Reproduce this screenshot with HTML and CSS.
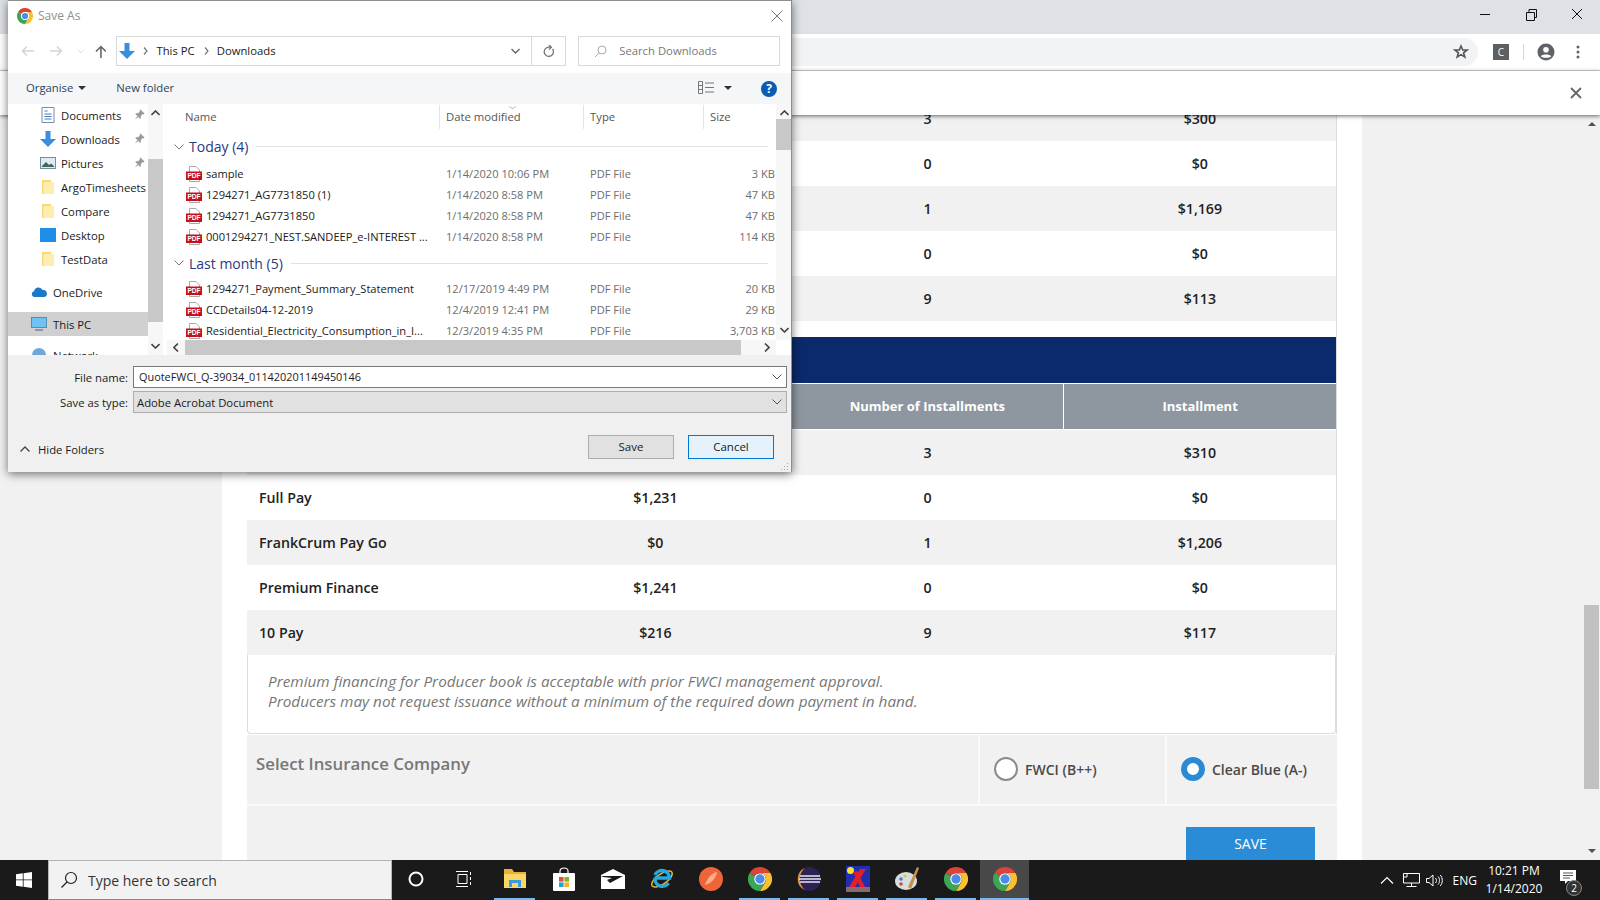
FILE: index.html
```html
<!DOCTYPE html>
<html>
<head>
    <meta charset="UTF-8">
    <meta name="viewport" content="width=device-width, initial-scale=1.0">
    <title>Save As</title>
    <link rel="stylesheet" href="styles.css">
</head>
<body>
    <svg class="defs" width="0" height="0">
        <symbol id="chrome" viewBox="0 0 16 16">
            <path fill="#db4437" d="M1.07 4A8 8 0 0 1 14.93 4H8A4 4 0 0 0 4.54 6Z"/>
            <path fill="#fbc02d" d="M14.93 4A8 8 0 0 1 8 16L11.46 10A4 4 0 0 0 8 4Z"/>
            <path fill="#3aa757" d="M1.07 4A8 8 0 0 0 8 16L11.46 10A4 4 0 0 1 4.54 6Z"/>
            <circle cx="8" cy="8" r="3.9" fill="#fff"/>
            <circle cx="8" cy="8" r="3.1" fill="#4a8ce8"/>
        </symbol>
        <symbol id="pdf" viewBox="0 0 16 16">
            <path fill="#fff" stroke="#a8a8a8" d="M3.5.5H10L13.5 4V15.5H3.5Z"/>
            <rect x="0" y="5.5" width="16" height="8.5" fill="#c4111b"/>
            <text x="8" y="12.2" class="pdf-label" text-anchor="middle">PDF</text>
        </symbol>
        <symbol id="folder" viewBox="0 0 16 16">
            <path fill="#f8d775" d="M2 1H11V15H2Z"/>
            <path fill="#fdeeb0" d="M3.5 3H14V15H3.5Z"/>
        </symbol>
        <symbol id="pin" viewBox="0 0 12 12">
            <path fill="#9a9a9a" d="M7 .5L11.5 5L10.5 6L9.5 5.5L7.5 7.5L7.5 10L6.5 10.5L1.5 5.5L2 4.5L4.5 4.5L6.5 2.5L6 1.5ZM3.5 8L4.5 9L1 11.5Z"/>
        </symbol>
        <symbol id="down-arrow" viewBox="0 0 16 16">
            <path fill="#3a8ee0" d="M5.5 0H10.5V8H16L8 16L0 8H5.5Z"/>
        </symbol>
    </svg>

    <div class="tabstrip">
        <div class="wincontrols">
            <svg width="46" height="28" viewBox="0 0 46 28"><path d="M18 14.5H28" stroke="#111" fill="none"/></svg>
            <svg width="46" height="28" viewBox="0 0 46 28"><path d="M18.5 12.5H26.5V20.5H18.5ZM21 12V9.5H28.5V17.5H27" stroke="#111" fill="none"/></svg>
            <svg width="46" height="28" viewBox="0 0 46 28"><path d="M18 9L28 19M28 9L18 19" stroke="#111" fill="none"/></svg>
        </div>
    </div>
    <div class="toolbar">
        <div class="omnibox">
            <svg width="16" height="16" viewBox="0 0 16 16"><path d="M8 2L9.7 6H14L10.6 8.8L11.8 13L8 10.6L4.2 13L5.4 8.8L2 6H6.3Z" fill="none" stroke="#555" stroke-width="1.6"/></svg>
        </div>
        <div class="ext-icon">C</div>
        <div class="toolbar-sep"></div>
        <svg class="account" width="18" height="18" viewBox="0 0 18 18"><circle cx="9" cy="9" r="8.5" fill="#5f6368"/><circle cx="9" cy="6.8" r="2.8" fill="#fff"/><path d="M3.8 13.2C5 10.8 13 10.8 14.2 13.2C12.6 15.4 5.4 15.4 3.8 13.2Z" fill="#fff"/></svg>
        <svg class="dots" width="4" height="14" viewBox="0 0 4 14"><circle cx="2" cy="2" r="1.5" fill="#5f6368"/><circle cx="2" cy="7" r="1.5" fill="#5f6368"/><circle cx="2" cy="12" r="1.5" fill="#5f6368"/></svg>
    </div>
    <div class="infobar">
        <svg width="12" height="12" viewBox="0 0 12 12"><path d="M1 1L11 11M11 1L1 11" stroke="#666" stroke-width="1.8" fill="none"/></svg>
    </div>

    <div class="page">
        <div class="panel">
            <div class="quote">
                <table class="plans">
                    <tr class="odd"><td></td><td></td><td>3</td><td>$300</td></tr>
                    <tr><td></td><td></td><td>0</td><td>$0</td></tr>
                    <tr class="odd"><td></td><td></td><td>1</td><td>$1,169</td></tr>
                    <tr><td></td><td></td><td>0</td><td>$0</td></tr>
                    <tr class="odd"><td></td><td></td><td>9</td><td>$113</td></tr>
                </table>
                <div class="section-head"></div>
                <table class="plans">
                    <tr class="head"><th></th><th></th><th>Number of Installments</th><th>Installment</th></tr>
                    <tr class="odd"><td></td><td></td><td>3</td><td>$310</td></tr>
                    <tr><td>Full Pay</td><td>$1,231</td><td>0</td><td>$0</td></tr>
                    <tr class="odd"><td>FrankCrum Pay Go</td><td>$0</td><td>1</td><td>$1,206</td></tr>
                    <tr><td>Premium Finance</td><td>$1,241</td><td>0</td><td>$0</td></tr>
                    <tr class="odd"><td>10 Pay</td><td>$216</td><td>9</td><td>$117</td></tr>
                </table>
                <div class="note">
                    Premium financing for Producer book is acceptable with prior FWCI management approval.<br>
                    Producers may not request issuance without a minimum of the required down payment in hand.
                </div>
            </div>
            <div class="company">
                <div class="company-title">Select Insurance Company</div>
                <div class="company-opt"><span class="radio"></span>FWCI (B++)</div>
                <div class="company-opt"><span class="radio on"></span>Clear Blue (A-)</div>
            </div>
            <div class="actions">
                <button class="save-btn">SAVE</button>
            </div>
        </div>
        <div class="page-scroll">
            <span class="tri up"></span>
            <span class="page-thumb"></span>
            <span class="tri down"></span>
        </div>
    </div>

    <div class="taskbar">
        <div class="start">
            <svg width="16" height="16" viewBox="0 0 16 16"><path fill="#fff" d="M0 2.3L6.8 1.3V7.5H0ZM7.6 1.2L16 0V7.5H7.6ZM0 8.3H6.8V14.7L0 13.7ZM7.6 8.3H16V16L7.6 14.8Z"/></svg>
        </div>
        <div class="search">
            <svg width="18" height="18" viewBox="0 0 18 18"><circle cx="11" cy="7" r="5.5" fill="none" stroke="#222" stroke-width="1.2"/><path d="M7 11L1.5 16.5" stroke="#222" stroke-width="1.3"/></svg>
            <span>Type here to search</span>
        </div>
        <div class="task-btn wide">
            <svg width="16" height="16" viewBox="0 0 16 16"><circle cx="8" cy="8" r="6.5" fill="none" stroke="#fff" stroke-width="2"/></svg>
        </div>
        <div class="task-btn wide taskview">
            <svg width="16" height="16" viewBox="0 0 16 16"><path d="M0 .5H12M0 15.5H12M2 3.5H11V12.5H2ZM14.5 1V4M14.5 6V9M14.5 11V14" fill="none" stroke="#fff"/></svg>
        </div>
        <div class="task-btn open">
            <svg width="22" height="20" viewBox="0 0 22 20"><path fill="#e8b23a" d="M0 0H8L10 3H22V19H0Z"/><path fill="#fbd566" d="M0 5H22V19H0Z"/><path fill="#3a9ae0" d="M5 11H17V18H14V14H8V18H5Z"/></svg>
        </div>
        <div class="task-btn">
            <svg width="22" height="24" viewBox="0 0 22 24"><path fill="none" stroke="#fff" stroke-width="1.2" d="M7 7V4C7 0 15 0 15 4V7"/><rect y="6" width="22" height="18" rx="1" fill="#fff"/><rect x="6" y="10" width="4.6" height="4.6" fill="#e0532f"/><rect x="11.4" y="10" width="4.6" height="4.6" fill="#7fb62c"/><rect x="6" y="15.4" width="4.6" height="4.6" fill="#2a9fe0"/><rect x="11.4" y="15.4" width="4.6" height="4.6" fill="#f6b31c"/></svg>
        </div>
        <div class="task-btn">
            <svg width="24" height="20" viewBox="0 0 24 20"><path fill="#fff" d="M0 6L12 0L24 6V20H0Z"/><path fill="#1a1a1a" d="M0 7L22 7L9 14L6 11L11 9L2 8Z"/></svg>
        </div>
        <div class="task-btn">
            <svg width="24" height="24" viewBox="0 0 24 24"><ellipse cx="12" cy="12" rx="12" ry="5" transform="rotate(-35 12 12)" fill="none" stroke="#e3b63a" stroke-width="1.5"/><path d="M4.5 11H19.5A7.6 7.6 0 0 0 5 8" fill="none" stroke="#2aa8e0" stroke-width="3.4"/><path d="M5 11A7.4 7.4 0 0 0 18.5 16" fill="none" stroke="#2aa8e0" stroke-width="3.4"/></svg>
        </div>
        <div class="task-btn">
            <svg width="24" height="26" viewBox="0 0 24 26"><circle cx="12" cy="13" r="12" fill="#f0643a"/><path d="M6 19C8 12 13 7 18 6C17 12 13 17 6 19Z" fill="#ffb089"/></svg>
        </div>
        <div class="task-btn open"><svg width="24" height="24"><use href="#chrome"/></svg></div>
        <div class="task-btn open">
            <svg width="24" height="24" viewBox="0 0 24 24"><circle cx="12" cy="12" r="12" fill="#2c2255"/><path d="M8 1A12 12 0 0 0 8 23A14 14 0 0 1 8 1Z" fill="#e89a3a"/><path d="M3 9H23M2 12H24M3 15H23" stroke="#e8e8f4" stroke-width="1.4"/></svg>
        </div>
        <div class="task-btn open">
            <svg width="24" height="26" viewBox="0 0 24 26"><rect width="24" height="26" fill="#1f2fb0"/><circle cx="4.5" cy="4.5" r="3.5" fill="#f5e23a"/><path d="M14 3L20 3L9 21L3 21ZM7 6L11 5L19 21L14 21Z" fill="#e01f2a"/><rect y="21" width="24" height="5" fill="#8a6a6a"/></svg>
        </div>
        <div class="task-btn open">
            <svg width="26" height="26" viewBox="0 0 26 26"><ellipse cx="12" cy="15" rx="11" ry="9" fill="#d7dde0"/><circle cx="7" cy="13" r="1.8" fill="#3a80c8"/><circle cx="11" cy="10" r="1.6" fill="#e0c43a"/><circle cx="7" cy="18" r="1.8" fill="#d8482f"/><path d="M14 21L23 1L25 2L17 23Z" fill="#c98f4a"/></svg>
        </div>
        <div class="task-btn open"><svg width="24" height="24"><use href="#chrome"/></svg></div>
        <div class="task-btn open active"><svg width="24" height="24"><use href="#chrome"/></svg></div>

        <div class="tray">
            <svg class="tray-chev" width="14" height="8" viewBox="0 0 14 8"><path d="M1 7.5L7 1.5L13 7.5" fill="none" stroke="#fff" stroke-width="1.2"/></svg>
            <svg class="tray-net" width="17" height="14" viewBox="0 0 17 14"><path d="M.5 .5H16.5V10H.5ZM8.5 10V13.5M3.5 13.5H13.5M.5 4H4V.5" fill="none" stroke="#fff"/></svg>
            <svg class="tray-vol" width="17" height="13" viewBox="0 0 17 13"><path d="M.5 4.5H3L7 1V12L3 8.5H.5ZM9.5 4C10.8 5.5 10.8 7.5 9.5 9M12 2.5C14 4.5 14 8.5 12 10.5M14.2 1C17 4 17 9 14.2 12" fill="none" stroke="#fff"/></svg>
            <span class="lang">ENG</span>
            <div class="clock"><span>10:21 PM</span><span>1/14/2020</span></div>
            <div class="notify">
                <svg width="16" height="14" viewBox="0 0 16 14"><path fill="#fff" d="M0 0H16V11H8L5 14V11H0Z"/><path d="M3 3H13M3 5.5H13M3 8H10" stroke="#555"/></svg>
                <span class="notify-count">2</span>
            </div>
        </div>
    </div>

    <div class="dialog">
        <div class="titlebar">
            <svg width="16" height="16"><use href="#chrome"/></svg>
            <span class="title-text">Save As</span>
            <svg class="title-close" width="12" height="12" viewBox="0 0 12 12"><path d="M.5 .5L11.5 11.5M11.5 .5L.5 11.5" stroke="#777" fill="none"/></svg>
        </div>
        <div class="navbar">
            <svg class="nav-arrow" width="14" height="12" viewBox="0 0 14 12"><path d="M13 6H2M6 1.5L1.5 6L6 10.5" stroke="#d4d4d4" stroke-width="1.5" fill="none"/></svg>
            <svg class="nav-arrow" width="14" height="12" viewBox="0 0 14 12"><path d="M1 6H12M8 1.5L12.5 6L8 10.5" stroke="#d4d4d4" stroke-width="1.5" fill="none"/></svg>
            <svg class="nav-arrow" width="8" height="5" viewBox="0 0 8 5"><path d="M.5 .5L4 4L7.5 .5" stroke="#dcdcdc" fill="none"/></svg>
            <svg class="nav-arrow up" width="12" height="13" viewBox="0 0 12 13"><path d="M6 13V2M1 6.5L6 1.5L11 6.5" stroke="#666" stroke-width="1.6" fill="none"/></svg>
            <div class="address">
                <svg width="16" height="16"><use href="#down-arrow"/></svg>
                <svg class="crumb-sep" width="5" height="8" viewBox="0 0 5 8"><path d="M1 .5L4 4L1 7.5" stroke="#777" fill="none" stroke-width="1.2"/></svg>
                <span>This PC</span>
                <svg class="crumb-sep second" width="5" height="8" viewBox="0 0 5 8"><path d="M1 .5L4 4L1 7.5" stroke="#777" fill="none" stroke-width="1.2"/></svg>
                <span>Downloads</span>
                <svg class="addr-chev" width="9" height="6" viewBox="0 0 9 6"><path d="M.5 1L4.5 5L8.5 1" stroke="#666" stroke-width="1.4" fill="none"/></svg>
                <div class="addr-refresh">
                    <svg width="11" height="12" viewBox="0 0 11 12"><path d="M9.5 4A4.6 4.6 0 1 1 5.5 2.2H8M6 0L8.4 2.2L6 4.4" stroke="#777" stroke-width="1.3" fill="none"/></svg>
                </div>
            </div>
            <div class="searchbox">
                <svg width="13" height="13" viewBox="0 0 13 13"><circle cx="8" cy="5" r="4" fill="none" stroke="#aaa"/><path d="M5 8L1 12" stroke="#aaa"/></svg>
                <span>Search Downloads</span>
            </div>
        </div>
        <div class="cmdbar">
            <span class="cmd">Organise<i class="caret"></i></span>
            <span class="cmd newfolder">New folder</span>
            <svg class="viewicon" width="16" height="13" viewBox="0 0 16 13"><path d="M.5 .5H4.5V12.5H.5ZM.5 4.5H4.5M.5 8.5H4.5M7 2H16M7 6.5H16M7 11H16" fill="none" stroke="#777"/></svg>
            <i class="caret view-caret"></i>
            <span class="help">?</span>
        </div>
        <div class="browser">
            <div class="sidebar">
                <div class="side-list">
                    <div class="side-item">
                        <svg width="13" height="16" viewBox="0 0 13 16"><path d="M.5 .5H12.5V15.5H.5Z" fill="#fff" stroke="#7b8ca0"/><path d="M3 4H6M3 7H10M3 9.5H10M3 12H10" stroke="#3a7ac0"/></svg>
                        <span>Documents</span>
                        <svg class="pin" width="11" height="11"><use href="#pin"/></svg>
                    </div>
                    <div class="side-item">
                        <svg width="16" height="16"><use href="#down-arrow"/></svg>
                        <span>Downloads</span>
                        <svg class="pin" width="11" height="11"><use href="#pin"/></svg>
                    </div>
                    <div class="side-item">
                        <svg width="16" height="12" viewBox="0 0 16 12"><rect x=".5" y=".5" width="15" height="11" fill="#dfeaf2" stroke="#7b8ca0"/><path d="M2 9L6 5L9 8L11 6.5L14 9V10H2Z" fill="#3e6a5a"/></svg>
                        <span>Pictures</span>
                        <svg class="pin" width="11" height="11"><use href="#pin"/></svg>
                    </div>
                    <div class="side-item"><svg width="16" height="16"><use href="#folder"/></svg><span>ArgoTimesheets</span></div>
                    <div class="side-item"><svg width="16" height="16"><use href="#folder"/></svg><span>Compare</span></div>
                    <div class="side-item">
                        <svg width="16" height="14" viewBox="0 0 16 14"><rect width="16" height="14" fill="#1e8fe6"/></svg>
                        <span>Desktop</span>
                    </div>
                    <div class="side-item last"><svg width="16" height="16"><use href="#folder"/></svg><span>TestData</span></div>
                    <div class="side-item shallow onedrive">
                        <svg width="16" height="10" viewBox="0 0 16 10"><path fill="#1d78c8" d="M3 10A3 3 0 0 1 3 4.2A4.6 4.6 0 0 1 11.6 3A3.5 3.5 0 0 1 13 10Z"/></svg>
                        <span>OneDrive</span>
                    </div>
                    <div class="side-item shallow selected">
                        <svg width="16" height="14" viewBox="0 0 16 14"><rect x=".5" y=".5" width="15" height="10" fill="#6fc3f2" stroke="#5a8ab0"/><path d="M4 13H12" stroke="#6a8aa0" stroke-width="1.5"/></svg>
                        <span>This PC</span>
                    </div>
                    <div class="side-item shallow">
                        <svg width="16" height="14" viewBox="0 0 16 14"><circle cx="8" cy="7" r="7" fill="#6fa8d8"/></svg>
                        <span>Network</span>
                    </div>
                </div>
                <div class="side-scroll">
                    <svg width="9" height="6" viewBox="0 0 9 6"><path d="M.5 5L4.5 1L8.5 5" stroke="#444" stroke-width="1.6" fill="none"/></svg>
                    <span class="side-thumb"></span>
                    <svg width="9" height="6" viewBox="0 0 9 6"><path d="M.5 1L4.5 5L8.5 1" stroke="#444" stroke-width="1.6" fill="none"/></svg>
                </div>
            </div>
            <div class="files">
                <div class="filepane">
                    <div class="cols">
                        <span class="col">Name</span>
                        <span class="col sorted">Date modified</span>
                        <span class="col">Type</span>
                        <span class="col">Size</span>
                    </div>
                    <div class="group">
                        <svg width="10" height="6" viewBox="0 0 10 6"><path d="M.5 .5L5 5L9.5 .5" stroke="#777" fill="none"/></svg>
                        <span>Today (4)</span><i></i>
                    </div>
                    <div class="file"><span class="fname"><svg width="16" height="16"><use href="#pdf"/></svg>sample</span><span>1/14/2020 10:06 PM</span><span>PDF File</span><span class="fsize">3 KB</span></div>
                    <div class="file"><span class="fname"><svg width="16" height="16"><use href="#pdf"/></svg>1294271_AG7731850 (1)</span><span>1/14/2020 8:58 PM</span><span>PDF File</span><span class="fsize">47 KB</span></div>
                    <div class="file"><span class="fname"><svg width="16" height="16"><use href="#pdf"/></svg>1294271_AG7731850</span><span>1/14/2020 8:58 PM</span><span>PDF File</span><span class="fsize">47 KB</span></div>
                    <div class="file"><span class="fname"><svg width="16" height="16"><use href="#pdf"/></svg>0001294271_NEST.SANDEEP_e-INTEREST ...</span><span>1/14/2020 8:58 PM</span><span>PDF File</span><span class="fsize">114 KB</span></div>
                    <div class="group next">
                        <svg width="10" height="6" viewBox="0 0 10 6"><path d="M.5 .5L5 5L9.5 .5" stroke="#777" fill="none"/></svg>
                        <span>Last month (5)</span><i></i>
                    </div>
                    <div class="file"><span class="fname"><svg width="16" height="16"><use href="#pdf"/></svg>1294271_Payment_Summary_Statement</span><span>12/17/2019 4:49 PM</span><span>PDF File</span><span class="fsize">20 KB</span></div>
                    <div class="file"><span class="fname"><svg width="16" height="16"><use href="#pdf"/></svg>CCDetails04-12-2019</span><span>12/4/2019 12:41 PM</span><span>PDF File</span><span class="fsize">29 KB</span></div>
                    <div class="file"><span class="fname"><svg width="16" height="16"><use href="#pdf"/></svg>Residential_Electricity_Consumption_in_I...</span><span>12/3/2019 4:35 PM</span><span>PDF File</span><span class="fsize">3,703 KB</span></div>
                </div>
                <div class="files-scroll">
                    <svg width="9" height="6" viewBox="0 0 9 6"><path d="M.5 5L4.5 1L8.5 5" stroke="#444" stroke-width="1.6" fill="none"/></svg>
                    <span class="files-thumb"></span>
                    <svg width="9" height="6" viewBox="0 0 9 6"><path d="M.5 1L4.5 5L8.5 1" stroke="#444" stroke-width="1.6" fill="none"/></svg>
                </div>
                <div class="hscroll">
                    <svg width="6" height="9" viewBox="0 0 6 9"><path d="M5 .5L1 4.5L5 8.5" stroke="#444" stroke-width="1.6" fill="none"/></svg>
                    <span class="hthumb"></span>
                    <svg width="6" height="9" viewBox="0 0 6 9"><path d="M1 .5L5 4.5L1 8.5" stroke="#444" stroke-width="1.6" fill="none"/></svg>
                </div>
            </div>
        </div>
        <div class="savefields">
            <div class="field">
                <label>File name:</label>
                <div class="namebox"><span>QuoteFWCI_Q-39034_011420201149450146</span><svg width="10" height="6" viewBox="0 0 10 6"><path d="M.5 .5L5 5L9.5 .5" stroke="#555" fill="none"/></svg></div>
            </div>
            <div class="field">
                <label>Save as type:</label>
                <div class="typebox">Adobe Acrobat Document<svg width="10" height="6" viewBox="0 0 10 6"><path d="M.5 .5L5 5L9.5 .5" stroke="#555" fill="none"/></svg></div>
            </div>
        </div>
        <div class="dlg-foot">
            <span class="hidefolders">
                <svg width="10" height="6" viewBox="0 0 10 6"><path d="M.5 5.5L5 1L9.5 5.5" stroke="#444" stroke-width="1.3" fill="none"/></svg>
                Hide Folders
            </span>
            <button class="dlg-btn">Save</button>
            <button class="dlg-btn focus">Cancel</button>
        </div>
        <svg class="grip" width="9" height="9" viewBox="0 0 9 9"><path d="M7 1h1v1H7zM4 4h1v1H4zM7 4h1v1H7zM1 7h1v1H1zM4 7h1v1H4zM7 7h1v1H7z" fill="#aaa"/></svg>
    </div>
</body>
</html>
```

FILE: styles.css
```css
* {
    box-sizing:border-box;
}
html, body {
    margin:0;
    height:100%;
}
body {
    width:1600px;
    height:900px;
    overflow:hidden;
    display:flex;
    flex-direction:column;
    position:relative;
    font-family:"Open Sans", "Noto Sans", sans-serif;
    background:#f1f1f1;
}
.defs {
    position:absolute;
}
.pdf-label {
    font-family:"Liberation Sans", sans-serif;
    font-size:6.6px;
    font-weight:bold;
    fill:#fff;
}

/* browser window */
.tabstrip {
    height:34px;
    flex:none;
    background:#dee1e6;
    display:flex;
    justify-content:flex-end;
}
.wincontrols {
    display:flex;
}
.wincontrols svg {
    display:block;
}
.toolbar {
    height:37px;
    flex:none;
    background:#fff;
    border-bottom:1px solid #d6d6d6;
    display:flex;
    align-items:center;
    padding-left:700px;
}
.omnibox {
    width:778px;
    height:28px;
    margin-bottom:1px;
    background:#f1f3f4;
    border-radius:0 14px 14px 0;
    display:flex;
    align-items:center;
    justify-content:flex-end;
    padding-right:9px;
}
.ext-icon {
    width:16px;
    height:16px;
    margin-left:15px;
    background:#5f5f5f;
    color:#fff;
    font-size:10px;
    line-height:16px;
    text-align:center;
}
.toolbar-sep {
    width:1px;
    height:16px;
    margin-left:14px;
    background:#d6d6d6;
}
.account {
    margin-left:13px;
}
.dots {
    margin-left:21px;
}
.infobar {
    height:44px;
    flex:none;
    background:#fff;
    box-shadow:0 1px 4px rgba(0,0,0,.6);
    position:relative;
    z-index:2;
    display:flex;
    align-items:center;
    justify-content:flex-end;
    padding-right:18px;
}

/* page under the dialog */
.page {
    flex:1;
    min-height:0;
    overflow:hidden;
    display:flex;
    background:#f1f1f1;
}
.panel {
    width:1140px;
    margin-left:222px;
    margin-top:-19px;
    padding:0 25px;
    background:#fff;
    flex:none;
}
.quote {
    border-right:1px solid #dcdcdc;
}
.plans {
    width:100%;
    border-collapse:collapse;
    table-layout:fixed;
}
.plans td {
    height:45px;
    padding:0;
    text-align:center;
    font-size:14.2px;
    font-weight:600;
    color:#222;
}
.plans td:first-child {
    text-align:left;
    padding-left:12px;
}
.plans .odd td {
    background:#f1f1f1;
}
.plans th {
    height:46px;
    padding:0 0 2px;
    background:#8e979f;
    border-top:1px solid #fff;
    border-bottom:1px solid #fff;
    font-size:13px;
    font-weight:700;
    color:#fff;
}
.plans th:last-child {
    border-left:1px solid #fff;
}
.section-head {
    height:46px;
    margin-top:16px;
    background:#0b2a6b;
}
.note {
    height:79px;
    padding:16px 20px 0;
    border:1px solid #dcdcdc;
    border-top:none;
    border-radius:0 0 4px 4px;
    font-size:15.3px;
    font-style:italic;
    line-height:20.5px;
    color:#777;
    background:#fff;
}
.company {
    display:grid;
    grid-template-columns:731px 187px 172px;
    background:#f1f1f1;
    height:71px;
    margin-top:1px;
    border-bottom:2px solid #fafafa;
}
.company-title {
    padding:17px 9px;
    font-size:16.8px;
    font-weight:600;
    color:#777;
}
.company-opt {
    display:flex;
    align-items:center;
    gap:7px;
    padding-left:14px;
    font-size:14px;
    font-weight:600;
    color:#4a4a4a;
    border-left:2px solid #fafafa;
}
.radio {
    width:24px;
    height:24px;
    border-radius:50%;
    border:2px solid #8a8a8f;
    background:#fff;
}
.radio.on {
    border:6px solid #2a8ad4;
}
.actions {
    height:60px;
    background:#f1f1f1;
    padding:21px 22px 0 0;
    display:flex;
    justify-content:flex-end;
}
.save-btn {
    width:129px;
    height:40px;
    border:none;
    background:#2a8bd6;
    color:#fff;
    font-family:inherit;
    font-size:14px;
    padding-bottom:7px;
}
.page-scroll {
    margin-left:auto;
    width:15px;
    margin-right:1px;
    display:flex;
    flex-direction:column;
    align-items:center;
}
.tri {
    width:0;
    height:0;
    border-left:4px solid transparent;
    border-right:4px solid transparent;
}
.tri.up {
    margin-top:7px;
    border-bottom:4px solid #505050;
}
.tri.down {
    margin-top:60px;
    border-top:4px solid #505050;
}
.page-thumb {
    width:100%;
    height:184px;
    margin-top:479px;
    background:#c1c1c1;
}

/* taskbar */
.taskbar {
    height:40px;
    flex:none;
    background:#1a1a1a;
    display:flex;
    align-items:stretch;
    position:relative;
    z-index:3;
}
.start {
    width:48px;
    display:flex;
    align-items:center;
    justify-content:center;
}
.search {
    width:344px;
    background:#f2f2f2;
    border:1px solid #b5b5b5;
    border-bottom-color:#888;
    display:flex;
    align-items:center;
    padding-left:11px;
    gap:10px;
    font-family:"Open Sans", sans-serif;
    font-size:14px;
    color:#333;
}
.task-btn {
    width:49px;
    display:flex;
    align-items:center;
    justify-content:center;
    padding-bottom:2px;
    position:relative;
}
.task-btn.wide {
    width:48px;
}
.taskview {
    margin-right:2px;
}
.task-btn.open::after {
    content:"";
    position:absolute;
    left:4px;
    right:4px;
    bottom:0;
    height:2px;
    background:#76b9ed;
}
.task-btn.active {
    background:#484848;
}
.task-btn.active::after {
    left:0;
    right:0;
}
.tray {
    margin-left:auto;
    display:flex;
    align-items:center;
    color:#fff;
    font-size:12px;
}
.tray-chev {
    margin-right:9px;
}
.tray-net {
    margin-right:6px;
}
.lang {
    margin:0 1px 0 10px;
}
.clock {
    width:72px;
    display:flex;
    flex-direction:column;
    align-items:center;
    line-height:18px;
}
.notify {
    width:50px;
    height:40px;
    position:relative;
    display:flex;
    align-items:center;
    padding:0 0 6px 10px;
}
.notify-count {
    position:absolute;
    left:16px;
    top:20px;
    width:16px;
    height:16px;
    border-radius:50%;
    border:1px solid #888;
    background:#333;
    font-size:10px;
    line-height:14px;
    text-align:center;
}

/* save dialog */
.dialog {
    position:absolute;
    left:8px;
    top:0;
    width:784px;
    height:472px;
    z-index:5;
    background:#fff;
    border:1px solid #8e8e8e;
    border-width:1px 1px 0 0;
    box-shadow:0 2px 9px rgba(0,0,0,.55);
    font-family:"Open Sans", sans-serif;
    font-size:11.3px;
    color:#1a1a1a;
    display:flex;
    flex-direction:column;
}
.titlebar {
    height:32px;
    flex:none;
    display:flex;
    align-items:center;
    padding:0 0 2px 9px;
    gap:5px;
}
.title-text {
    color:#8f8f8f;
    font-size:12px;
    padding-bottom:2px;
}
.title-close {
    margin-left:auto;
    margin-right:8px;
}
.navbar {
    height:40px;
    flex:none;
    display:flex;
    align-items:center;
    padding:0 11px 4px 13px;
}
.nav-arrow {
    margin-right:14px;
}
.nav-arrow + .nav-arrow + .nav-arrow {
    margin-right:10px;
}
.nav-arrow.up {
    margin-right:0;
}
.address {
    width:455px;
    height:30px;
    border:1px solid #d9d9d9;
    display:flex;
    align-items:center;
    padding-left:2px;
    gap:8px;
}
.address span, .searchbox span {
    padding-bottom:2px;
}
.crumb-sep.second {
    margin-left:1px;
}
.addr-chev {
    margin-left:auto;
    margin-right:3px;
}
.addr-refresh {
    width:34px;
    height:100%;
    border-left:1px solid #d9d9d9;
    display:flex;
    align-items:center;
    justify-content:center;
}
.searchbox {
    width:204px;
    height:30px;
    margin-left:12px;
    border:1px solid #d9d9d9;
    display:flex;
    align-items:center;
    padding-left:15px;
    gap:12px;
    color:#777;
}
.cmdbar {
    height:31px;
    flex:none;
    background:#f5f6f7;
    display:flex;
    align-items:center;
    padding:0 0 2px 18px;
    color:#2e4260;
}
.caret {
    display:inline-block;
    width:0;
    height:0;
    margin-left:5px;
    vertical-align:2px;
    border-left:4px solid transparent;
    border-right:4px solid transparent;
    border-top:4px solid #333;
}
.newfolder {
    margin-left:30px;
}
.viewicon {
    margin-left:auto;
}
.view-caret {
    margin:0 0 0 10px;
}
.help {
    width:16px;
    height:16px;
    margin:2px 14px 0 29px;
    border-radius:50%;
    background:#0a5db5;
    color:#fff;
    font-size:12px;
    font-weight:700;
    line-height:16px;
    text-align:center;
}
.browser {
    height:251px;
    flex:none;
    display:flex;
    overflow:hidden;
    background:#fff;
}
.sidebar {
    width:155px;
    flex:none;
    display:flex;
    margin-right:4px;
}
.side-list {
    width:140px;
    flex:none;
    margin-top:-1px;
}
.side-item {
    height:24px;
    display:flex;
    align-items:center;
    gap:5px;
    padding-left:32px;
    position:relative;
    white-space:nowrap;
}
.side-item svg:first-child {
    width:16px;
}
.side-item.last {
    margin-bottom:9px;
}
.side-item.onedrive {
    margin-bottom:8px;
}
.side-item.shallow {
    padding-left:23px;
    gap:6px;
}
.side-item.selected {
    background:#d0d0d0;
    margin-bottom:7px;
}
.pin {
    position:absolute;
    right:3px;
    top:6px;
}
.side-scroll {
    width:15px;
    display:flex;
    flex-direction:column;
    align-items:center;
    padding-top:6px;
    background:#f7f7f7;
}
.side-thumb {
    width:100%;
    height:163px;
    margin:43px 0 21px;
    background:#c8c8c8;
}
.files {
    flex:1;
    display:grid;
    grid-template-columns:1fr 16px;
    grid-template-rows:236px 15px;
}
.filepane {
    overflow:hidden;
    padding-left:2px;
}
.cols, .file {
    display:grid;
    grid-template-columns:271px 144px 120px 71px;
}
.cols {
    height:26px;
    align-items:center;
    color:#555;
}
.col {
    padding-left:6px;
    height:24px;
    line-height:24px;
    border-right:1px solid #e5e5e5;
}
.col:first-child {
    padding-left:16px;
}
.col:last-child {
    border-right:none;
}
.sorted {
    position:relative;
}
.sorted::before {
    content:"";
    position:absolute;
    left:69px;
    top:-2px;
    width:6px;
    height:6px;
    border:solid #aaa;
    border-width:0 1px 1px 0;
    transform:scale(.8,.5) rotate(45deg);
}
.group {
    height:33px;
    display:flex;
    align-items:center;
    padding:0 8px 0 5px;
    gap:5px;
    color:#2a3a80;
    font-size:14px;
}
.group i {
    flex:1;
    height:1px;
    margin-left:3px;
    background:#e2e2e2;
}
.group.next {
    height:30px;
    margin-top:1px;
}
.file {
    height:21px;
    align-items:center;
    color:#6d6d6d;
    font-size:11.1px;
}
.file span {
    padding-left:6px;
    white-space:nowrap;
}
.file .fname {
    display:flex;
    align-items:center;
    gap:4px;
    padding-left:17px;
    color:#1a1a1a;
}
.file .fsize {
    padding:0;
    text-align:right;
}
.files-scroll {
    grid-row:1;
    grid-column:2;
    display:flex;
    flex-direction:column;
    align-items:center;
    padding-top:6px;
    background:#f7f7f7;
}
.files-thumb {
    width:100%;
    height:31px;
    margin:3px 0 177px;
    background:#c8c8c8;
}
.hscroll {
    grid-row:2;
    grid-column:1;
    display:flex;
    align-items:center;
    background:#f7f7f7;
    padding:0 6px;
}
.hthumb {
    height:100%;
    width:556px;
    margin:0 23px 0 6px;
    background:#c8c8c8;
}
.savefields {
    background:#f0f0f0;
    padding:11px 4px 0 0;
    flex:none;
}
.field {
    display:flex;
    align-items:center;
    margin-bottom:3px;
}
.field label {
    width:120px;
    text-align:right;
    margin-right:5px;
}
.namebox, .typebox {
    flex:1;
    height:22px;
    padding-left:5px;
    display:flex;
    align-items:center;
    justify-content:space-between;
    padding-right:4px;
    border:1px solid #7a7a7a;
    background:#fff;
}
.namebox span {
    font-size:10.9px;
    padding-bottom:2px;
}
.typebox {
    background:#e1e1e1;
    border-color:#adadad;
    padding-left:3px;
}
.dlg-foot {
    flex:1;
    background:#f0f0f0;
    display:flex;
    align-items:center;
    padding:5px 17px 0 12px;
    gap:14px;
    position:relative;
}
.hidefolders {
    display:flex;
    align-items:center;
    gap:8px;
    margin:5px auto 0 0;
}
.dlg-btn {
    width:86px;
    height:24px;
    padding:0;
    border:1px solid #adadad;
    background:#e1e1e1;
    font-family:inherit;
    font-size:11.5px;
    color:#1a1a1a;
}
.dlg-btn.focus {
    background:#e5f1fb;
    border-color:#0078d7;
}
.grip {
    position:absolute;
    right:2px;
    bottom:1px;
}
```
